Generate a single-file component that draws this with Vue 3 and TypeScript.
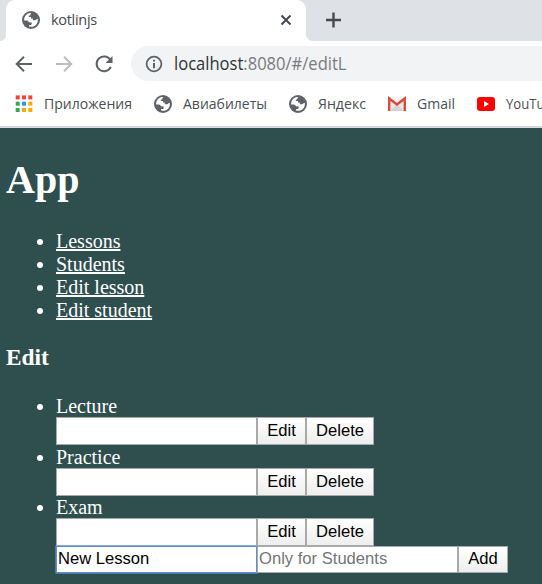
<script setup lang="ts">
import { ref } from 'vue'

interface Bookmark {
  label: string
  icon: 'apps' | 'globe' | 'gmail' | 'youtube'
  width: number
}

const bookmarks: Bookmark[] = [
  { label: 'Приложения', icon: 'apps', width: 88 },
  { label: 'Авиабилеты', icon: 'globe', width: 84 },
  { label: 'Яндекс', icon: 'globe', width: 48 },
  { label: 'Gmail', icon: 'gmail', width: 38 },
  { label: 'YouTube', icon: 'youtube', width: 54 },
]
const appColors = ['#f44336', '#f44336', '#f44336', '#34a853', '#2196f3', '#fbaa05', '#34a853', '#fbaa05', '#fbaa05']
const links = ['Lessons', 'Students', 'Edit lesson', 'Edit student']
const lessons = ref([
  { name: 'Lecture', value: '' },
  { name: 'Practice', value: '' },
  { name: 'Exam', value: '' },
])
const newLesson = ref('New Lesson')
const students = ref('')
</script>

<template>
  <div class="window">
    <svg class="defs" width="0" height="0">
      <symbol id="globe" viewBox="0 0 18 18">
        <circle cx="9" cy="9" r="9" fill="#5f6368" />
        <path d="M2.1 8.5C2.4 5.2 5 2.2 8.3 2.1L9.4 2.2C8.4 2.7 8.2 3.4 8.3 4.2L6.8 4.8V6.1H9V7.6H10.8V9.2H13.1C14.2 9 14.3 7.8 15.7 7.7C16.8 12.5 12.3 17 7.1 15.6V13.9H8.8C9.9 13.6 10 12.4 9.6 11.6L7 11.3C6.4 9.5 5 9.3 2.1 9.4Z" fill="#fff" />
      </symbol>
    </svg>
    <header class="strip">
      <div class="tab">
        <svg class="globe" width="18" height="18"><use href="#globe" /></svg>
        <span class="title">kotlinjs</span>
        <svg class="close" width="12" height="12" viewBox="0 0 12 12"><path d="M1.5 1.5L10.5 10.5M10.5 1.5L1.5 10.5" stroke="#45494d" stroke-width="2" /></svg>
      </div>
      <svg class="plus" width="16" height="16" viewBox="0 0 16 16"><path d="M7.5 0.5V15.5M0 8H15" stroke="#45494d" stroke-width="2.4" /></svg>
    </header>
    <nav class="toolbar">
      <svg width="18" height="18" viewBox="0 0 18 18"><path d="M17 9H2M9 1.7L1.7 9L9 16.3" fill="none" stroke="#5f6368" stroke-width="2" /></svg>
      <svg width="18" height="18" viewBox="0 0 18 18"><path d="M1 9H16M9 1.7L16.3 9L9 16.3" fill="none" stroke="#bbbdbf" stroke-width="2" /></svg>
      <svg width="18" height="18" viewBox="0 0 18 18"><path d="M15.5 5.2A7.4 7.4 0 1 0 15.8 11.8" fill="none" stroke="#5f6368" stroke-width="2" /><path d="M17.5 1V8H10.5Z" fill="#5f6368" /></svg>
      <div class="address">
        <svg width="18" height="18" viewBox="0 0 18 18"><circle cx="9" cy="9" r="7.4" fill="none" stroke="#5f6368" stroke-width="1.8" /><path d="M9 4.7V6.5M9 8V13.2" stroke="#5f6368" stroke-width="2" /></svg>
        <svg class="url" width="180" height="28"><text x="0" y="20" textLength="172.5" lengthAdjust="spacingAndGlyphs"><tspan fill="#303338">localhost</tspan><tspan fill="#777c81">:8080/#/editL</tspan></text></svg>
      </div>
    </nav>
    <nav class="bookmarks">
      <div v-for="item in bookmarks" :key="item.label" class="bookmark">
        <svg v-if="item.icon === 'apps'" width="18" height="18" viewBox="0 0 18 18">
          <rect v-for="(color, i) in appColors" :key="i" :x="(i % 3) * 6.3 + 0.7" :y="Math.floor(i / 3) * 6.3 + 0.4" width="4" height="4" :fill="color" />
        </svg>
        <svg v-else-if="item.icon === 'globe'" width="18" height="18"><use href="#globe" /></svg>
        <svg v-else-if="item.icon === 'gmail'" width="18" height="14" viewBox="0 0 18 14">
          <rect width="18" height="14" rx="1" fill="#e8e8e8" />
          <path d="M2 14L9 7L16 14Z" fill="#d4d4d4" />
          <path d="M2 0H16L9 6Z" fill="#f5f5f5" />
          <path d="M1.2 14V1.5L9 7.5L16.8 1.5V14" fill="none" stroke="#db4a3d" stroke-width="2.4" />
        </svg>
        <svg v-else width="18" height="14" viewBox="0 0 18 14"><rect width="18" height="14" rx="3" fill="#f00" /><path d="M7 4L12 7L7 10Z" fill="#fff" /></svg>
        <svg class="label" :width="item.width" height="22"><text x="0" y="16" :textLength="item.width" lengthAdjust="spacingAndGlyphs">{{ item.label }}</text></svg>
      </div>
    </nav>
    <main class="page">
      <h1>App</h1>
      <ul class="links">
        <li v-for="link in links" :key="link"><a href="#">{{ link }}</a></li>
      </ul>
      <h3>Edit</h3>
      <ul class="lessons">
        <li v-for="lesson in lessons" :key="lesson.name">
          <div class="name">{{ lesson.name }}</div>
          <div class="row">
            <input v-model="lesson.value" type="text" />
            <button class="edit">Edit</button>
            <button class="delete">Delete</button>
          </div>
        </li>
      </ul>
      <div class="row add-row">
        <input v-model="newLesson" class="active" type="text" />
        <input v-model="students" type="text" placeholder="Only for Students" />
        <button class="add">Add</button>
      </div>
    </main>
  </div>
</template>

<style>
body {
  margin: 0;
  overflow: hidden;
}
</style>

<style scoped>
.window {
  display: flex;
  flex-direction: column;
  width: 542px;
  height: 584px;
  overflow: hidden;
  background: #fff;
  font-family: "Open Sans", "Noto Sans", sans-serif;
}
svg {
  display: block;
  flex: none;
  overflow: visible;
}
.defs {
  height: 0;
}
.strip {
  display: flex;
  flex: none;
  align-items: center;
  height: 41px;
  background:
    radial-gradient(circle at 0 0, #dee1e6 5.5px, #fff 6.5px) 0 35px / 6px 6px no-repeat,
    radial-gradient(circle at 100% 0, #dee1e6 6.5px, #fff 7.5px) 306px 34px / 7px 7px no-repeat,
    #dee1e6;
}
.tab {
  display: flex;
  align-items: center;
  box-sizing: border-box;
  width: 300px;
  height: 41px;
  margin-left: 6px;
  padding: 0 14px 1px 16px;
  border-radius: 9px 9px 0 0;
  background: #fff;
}
.title {
  flex: 1;
  margin-left: 11px;
  padding-bottom: 1px;
  color: #45494d;
  font-size: 14.5px;
  letter-spacing: -0.3px;
}
.plus {
  margin: 0 0 1px 20px;
}
.toolbar {
  display: flex;
  flex: none;
  align-items: center;
  gap: 22px;
  height: 45px;
  padding-left: 15px;
}
.address {
  display: flex;
  flex: 1;
  align-items: center;
  gap: 11px;
  height: 35px;
  margin-left: -4px;
  padding-left: 14px;
  border-radius: 18px 0 0 18px;
  background: #f1f3f4;
}
.url text {
  font-size: 18.5px;
}
.bookmarks {
  display: flex;
  flex: none;
  align-items: center;
  gap: 22px;
  box-sizing: border-box;
  height: 42px;
  padding: 0 0 4px 15px;
  border-bottom: 2px solid #d5d9de;
  overflow: hidden;
}
.bookmark {
  display: flex;
  flex: none;
  align-items: center;
  gap: 11px;
}
.label text {
  fill: #4b4f53;
  font-size: 14.7px;
}
.page {
  flex: 1;
  padding-left: 6px;
  background: #2f4f4f;
  color: #fff;
  font: 20px/23px "Liberation Serif", serif;
}
h1 {
  margin: 29px 0 27px;
  font-size: 40px;
  line-height: 46px;
}
h3 {
  margin: 22px 0 23px;
  font-size: 23.4px;
  line-height: 27px;
}
ul {
  margin: 0;
  padding-left: 50px;
}
a {
  color: #fff;
  text-decoration-thickness: 2px;
}
.lessons li {
  height: 50.6px;
}
.name {
  height: 23px;
  line-height: 25px;
}
.row {
  display: flex;
}
input,
button {
  box-sizing: border-box;
  height: 28px;
  margin: 0;
  border: 1px solid #a9a9a9;
  border-radius: 0;
  outline: none;
  font: 16.6px "Liberation Sans", sans-serif;
}
input {
  width: 201px;
  padding: 1px;
  background: #fff;
  color: #000;
}
input::placeholder {
  color: #757575;
}
.active {
  border-color: #5b8fdd;
  box-shadow: 0 0 0 0.5px #78a3e5;
}
button {
  padding: 0;
  background: linear-gradient(#fff, #eee);
  color: #000;
}
.edit {
  width: 49px;
}
.delete {
  width: 68px;
}
.add {
  width: 50px;
}
.add-row {
  padding-left: 50px;
}
.add-row input,
.add-row button {
  height: 27px;
}
</style>
